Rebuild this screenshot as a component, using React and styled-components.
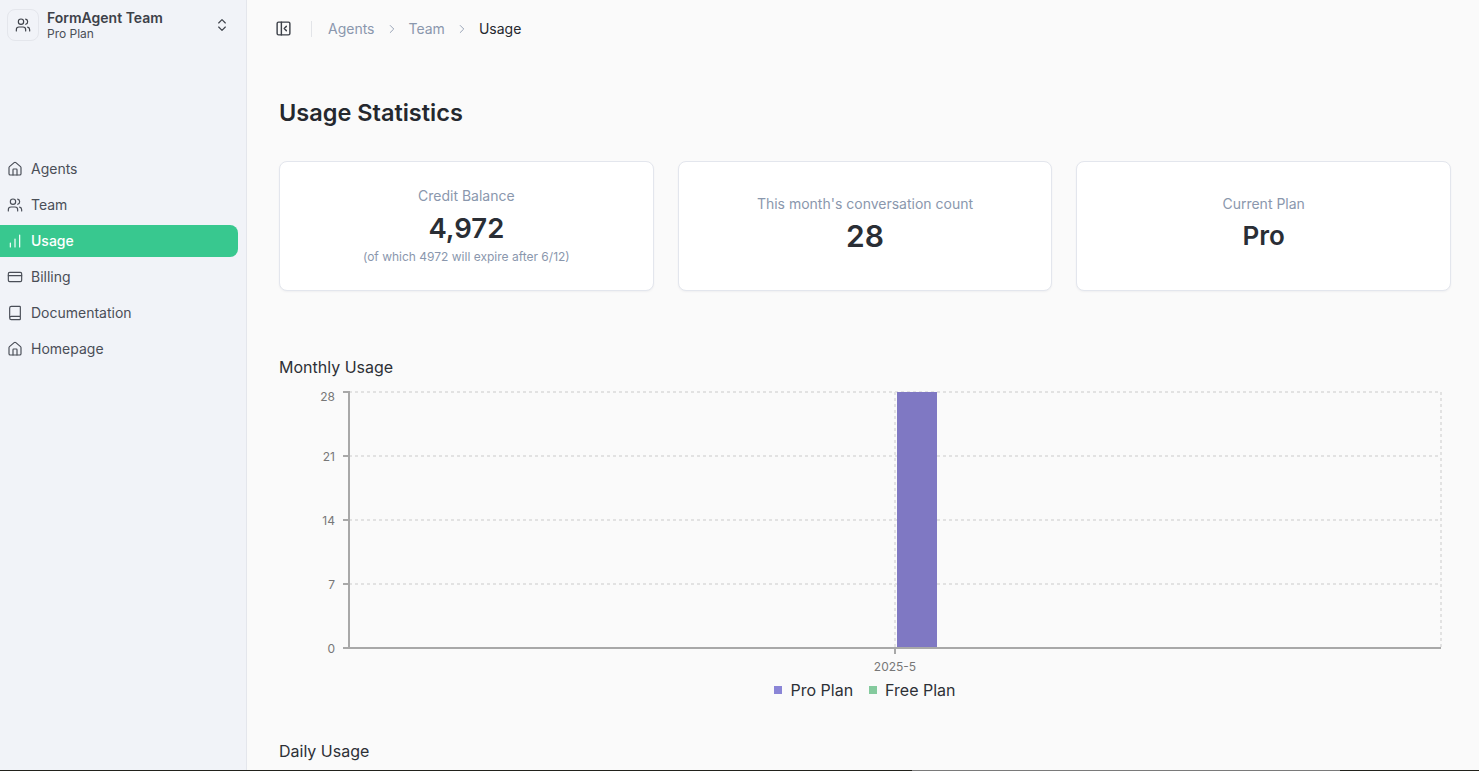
import React from 'react';
import styled, { createGlobalStyle } from 'styled-components';
import { Users, ChevronsUpDown, House, ChartNoAxesColumnIncreasing, CreditCard, Book, ChevronRight, PanelLeftClose } from 'lucide-react';

const Global = createGlobalStyle`
  html, body { margin: 0; height: 100%; overflow: hidden; }
  body { font-family: Inter, "Liberation Sans", sans-serif; background: #fafafa; color: #25282e; }
`;
const Page = styled.div`
  position: relative; display: flex; height: 771px; overflow: hidden; box-sizing: border-box;
  &::after {
    content: ""; position: absolute; left: 0; right: 0; bottom: 0; height: 1px;
    background: linear-gradient(90deg, #22221c 0 912px, #7a7a7a 912px 1340px, #22221c 1340px);
  }
`;
const Sidebar = styled.aside`width: 247px; flex: none; box-sizing: border-box; background: #f1f3f8; border-right: 1px solid #e4e6ec; padding: 9px 8px 0 0;`;
const Switcher = styled.div`display: flex; align-items: center; gap: 8px; padding-left: 7px; height: 32px;`;
const Avatar = styled.div`width: 32px; height: 32px; box-sizing: border-box; border: 1px solid #e4e6ec; border-radius: 8px; display: flex; align-items: center; justify-content: center; color: #3d4149;`;
const TeamText = styled.div`flex: 1; display: flex; flex-direction: column; margin-top: -1px;`;
const TeamName = styled.div`font-size: 14px; line-height: 17px; font-weight: 600; color: #3d4149;`;
const TeamPlan = styled.div`font-size: 12px; line-height: 15px; color: #4a4e57;`;
const Updown = styled.div`color: #3d4149; display: flex; margin-right: 8px;`;
const Nav = styled.nav`margin-top: 112px; display: flex; flex-direction: column; gap: 4px;`;
const NavItem = styled.div`
  height: 32px; box-sizing: border-box; display: flex; align-items: center; gap: 8px; padding: 0 0 1px 7px;
  font-size: 14px; border-radius: 0 8px 8px 0;
  color: ${p => (p.$active ? '#fff' : '#4a4e57')};
  background: ${p => (p.$active ? '#38c88f' : 'transparent')};
  font-weight: ${p => (p.$active ? 500 : 400)};
`;
const Main = styled.main`flex: 1; min-width: 0; padding: 0 28px 0 32px;`;
const Header = styled.header`height: 57px; display: flex; align-items: center; margin-left: -4px;`;
const Toggle = styled.div`display: flex; color: #3d4149; margin-right: 19px;`;
const Divider = styled.div`width: 1px; height: 16px; background: #e2e4e8; margin-right: 16px;`;
const Crumb = styled.span`font-size: 14px; color: ${p => (p.$current ? '#25282e' : '#8a97ad')};`;
const Sep = styled.span`display: flex; color: #8a97ad; margin: 0 10px;`;
const Title = styled.h1`margin: 41px 0 0; font-size: 23.5px; line-height: 30px; font-weight: 600; color: #25282e;`;
const Cards = styled.div`margin-top: 33px; display: grid; grid-template-columns: repeat(3, 1fr); gap: 24px;`;
const Card = styled.div`
  height: 130px; box-sizing: border-box; background: #fff; border: 1px solid #e3e6ed; border-radius: 8px;
  box-shadow: 0 1px 2px rgba(30, 40, 70, .05);
  display: flex; flex-direction: column; align-items: center; justify-content: center;
`;
const CardLabel = styled.div`font-size: 14px; line-height: 20px; color: #8a97ad;`;
const CardValue = styled.div`font-size: ${p => p.$size}px; line-height: 36px; font-weight: 600; color: #2a2e35; margin: 4px 0;`;
const CardNote = styled.div`font-size: 12px; line-height: 18px; color: #8a97ad; margin-top: -2px;`;
const SectionTitle = styled.h2`margin: 0; font-size: 16px; line-height: 22px; font-weight: 400; color: #2d3036;`;
const MonthlyTitle = styled(SectionTitle)`margin-top: 65px;`;
const DailyTitle = styled(SectionTitle)`margin-top: 40px;`;
const Chart = styled.svg`display: block; width: 1172px; height: 291px; margin-top: 11px;`;
const Legend = styled.div`display: flex; justify-content: center; gap: 16px; height: 20px; align-items: center;`;
const LegendItem = styled.div`display: flex; align-items: center; gap: 8px; font-size: 16px; color: #2d3036;`;
const Swatch = styled.span`width: 8px; height: 8px; background: ${p => p.$color};`;

const ICON = { size: 16, strokeWidth: 1.75 };
const items = [
  ['Agents', House], ['Team', Users], ['Usage', ChartNoAxesColumnIncreasing], ['Billing', CreditCard], ['Documentation', Book], ['Homepage', House],
];
const left = 70, right = 1162, top = 3, bottom = 259;
const ticks = [[28, 3], [21, 67], [14, 131], [7, 195], [0, 259]];

export default function App() {
  return (
    <Page>
      <Global />
      <Sidebar>
        <Switcher>
          <Avatar><Users {...ICON} /></Avatar>
          <TeamText><TeamName>FormAgent Team</TeamName><TeamPlan>Pro Plan</TeamPlan></TeamText>
          <Updown><ChevronsUpDown {...ICON} /></Updown>
        </Switcher>
        <Nav>
          {items.map(([label, Icon]) => (
            <NavItem key={label} $active={label === 'Usage'}><Icon {...ICON} />{label}</NavItem>
          ))}
        </Nav>
      </Sidebar>
      <Main>
        <Header>
          <Toggle><PanelLeftClose size={17} strokeWidth={2} /></Toggle>
          <Divider />
          <Crumb>Agents</Crumb><Sep><ChevronRight size={14} strokeWidth={1.5} /></Sep>
          <Crumb>Team</Crumb><Sep><ChevronRight size={14} strokeWidth={1.5} /></Sep>
          <Crumb $current>Usage</Crumb>
        </Header>
        <Title>Usage Statistics</Title>
        <Cards>
          <Card><CardLabel>Credit Balance</CardLabel><CardValue $size={27.5}>4,972</CardValue><CardNote>(of which 4972 will expire after 6/12)</CardNote></Card>
          <Card><CardLabel>This month's conversation count</CardLabel><CardValue $size={30}>28</CardValue></Card>
          <Card><CardLabel>Current Plan</CardLabel><CardValue $size={26}>Pro</CardValue></Card>
        </Cards>
        <MonthlyTitle>Monthly Usage</MonthlyTitle>
        <Chart viewBox="0 0 1172 291">
          <g stroke="#e2e2e2" strokeWidth="2" strokeDasharray="3 3" fill="none">
            {ticks.slice(0, 4).map(([v, y]) => <line key={v} x1={left} x2={right} y1={y} y2={y} />)}
            <line x1={right} x2={right} y1={top} y2={bottom} />
            <line x1="616" x2="616" y1={top} y2={bottom} />
          </g>
          <rect x="618" y={top} width="40" height={bottom - top} fill="#7f78c3" />
          <g stroke="#a8a8a8" strokeWidth="2" fill="none">
            <line x1={left} x2={left} y1={top - 1} y2={bottom + 1} />
            <line x1={left} x2={right} y1={bottom} y2={bottom} />
            {ticks.map(([v, y]) => <line key={v} x1={left - 6} x2={left} y1={y} y2={y} />)}
            <line x1="616" x2="616" y1={bottom} y2={bottom + 6} />
          </g>
          <g fontSize="12" fill="#777" fontFamily="Inter, sans-serif">
            {ticks.map(([v, y], i) => <text key={v} x={left - 14} y={y + (i === 0 ? 9 : 5)} textAnchor="end">{v}</text>)}
            <text x="616" y={bottom + 23} textAnchor="middle">2025-5</text>
          </g>
        </Chart>
        <Legend>
          <LegendItem><Swatch $color="#8a85d6" />Pro Plan</LegendItem>
          <LegendItem><Swatch $color="#84ca9d" />Free Plan</LegendItem>
        </Legend>
        <DailyTitle>Daily Usage</DailyTitle>
      </Main>
    </Page>
  );
}
